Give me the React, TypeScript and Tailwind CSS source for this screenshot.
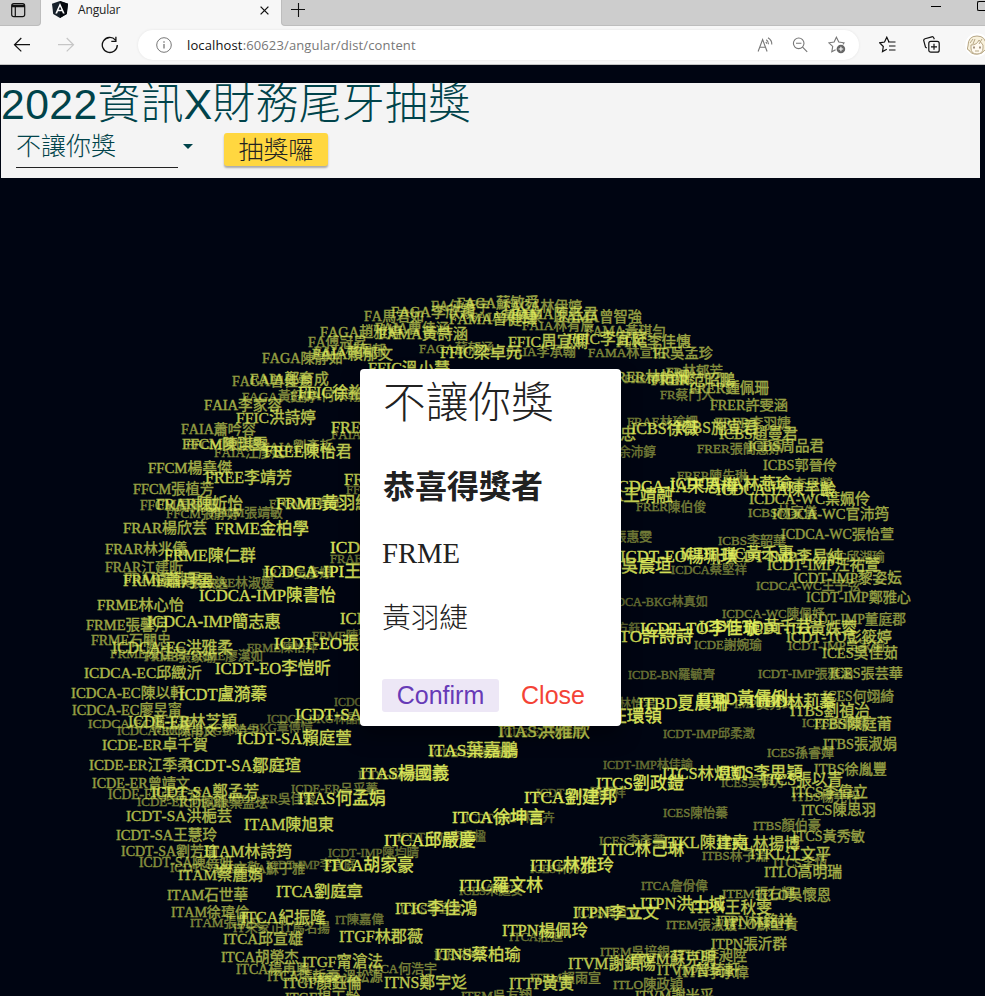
import React from "react";

type Tag = [label: string, left: number, right: number, middle: number];

const tags: Tag[] = [
  ["FA馬君如", 364, 424, 316], ["FAGA趙雅婷", 320, 402, 332], ["FA傅冠昇", 308, 367, 342],
  ["FAGA陳靜如", 262, 343, 357], ["FAIA林佩郁", 314, 386, 350], ["FAIA賴郁文", 312, 393, 353],
  ["FAGA曾佳雯", 232, 312, 381], ["FAIA鄭育成", 250, 329, 379], ["FAGA黃鈺婷", 242, 317, 396],
  ["FAIA何宗翰", 290, 361, 395], ["FFIC徐裕翔", 298, 381, 393], ["FAIA李家容", 204, 282, 405],
  ["FFIC洪詩婷", 236, 316, 417], ["FAIA蕭吟容", 181, 256, 428], ["FFCM陳佳雯", 186, 262, 444],
  ["FFCM陳琪雯", 182, 268, 443], ["FAIA江彥廷", 214, 285, 452], ["FAIA劉彥哲", 262, 333, 446],
  ["FREE陳怡君", 264, 352, 451], ["FREE林怡芳", 331, 420, 428], ["FAIA王志明", 331, 401, 434],
  ["FAGA李欣穎", 391, 475, 312], ["FA任彥宇", 431, 490, 306], ["FAGA蘇敏舜", 457, 539, 303],
  ["FAGA林伊婷", 503, 582, 306], ["FAMA陳老君", 511, 598, 314], ["FAMA曾健瑋", 449, 537, 319],
  ["FAIA黃健豪", 470, 542, 316], ["FAMA曾智強", 558, 642, 317], ["FAIA林宥辰", 522, 594, 325],
  ["FAMA黃琪勻", 585, 666, 331], ["FAIA曹佳涵", 375, 450, 327], ["FAMA黃詩涵", 378, 468, 333],
  ["FFIC周宜嫻", 508, 588, 341], ["FFIC李宜庭", 567, 647, 338], ["FFIC李佳憓", 616, 691, 342],
  ["FAGA蘇郁涵", 419, 494, 348], ["FFIC梁卓元", 440, 522, 352], ["FAIA李承翰", 506, 576, 351],
  ["FAMA林宣佑", 588, 666, 352], ["FR吳孟珍", 653, 713, 353], ["FFIC溫小慧", 368, 450, 368],
  ["FR林郁芳", 666, 723, 371], ["FRER林怡姍", 608, 690, 377], ["FRER范昭鵬", 651, 735, 379],
  ["FRER陳怡娟", 624, 692, 379], ["FRER鍾佩珊", 689, 769, 388], ["FR蔡門人", 660, 714, 395],
  ["FRER許雯涵", 710, 788, 404], ["FRAE林瑜姍", 627, 698, 422], ["FRER李羽婕", 715, 791, 423],
  ["ICBS徐薇", 631, 699, 428], ["ICBS施宜君", 676, 758, 427], ["ICBS趙曼君", 719, 798, 434],
  ["FRER張簡惠婷", 697, 782, 448], ["ICBS周品君", 748, 824, 446], ["FREE陳孝忠", 550, 636, 434],
  ["FRAE余沛錞", 586, 656, 452], ["ICBS郭晉伶", 763, 837, 464], ["FRER陳先琳", 677, 748, 476],
  ["ICDCA-IA宋思樺", 612, 738, 487], ["ICBS李思瑩", 763, 833, 484], ["ICDCA-IA林燕瑜", 670, 792, 484],
  ["ICDCA-IA陳芊齡", 716, 836, 489], ["ICDCA-IA王靖融", 549, 673, 496], ["ICDCA-WC葉姵伶", 749, 870, 499],
  ["FRER陳伯俊", 636, 706, 507], ["ICBS林家儀", 748, 817, 512], ["ICDCA-WC官沛筠", 772, 889, 514],
  ["FRER張惠雯", 582, 652, 537], ["ICBS李韶華", 718, 786, 540], ["ICDCA-WC張怡萱", 781, 894, 534],
  ["ICDT-EO楊珮琪", 620, 737, 557], ["ICDT-EO吳晨垣", 554, 672, 567], ["ICDT-HC黃禾惠", 680, 794, 553],
  ["ICDT-IMP李易純", 728, 843, 556], ["ICDCA-WC邱湖瑜", 781, 885, 557], ["ICDT-IMP汪祐萱", 767, 880, 564],
  ["ICDCA蔡堅祥", 671, 747, 570], ["ICDT-IMP黎姿妘", 793, 902, 578], ["ICDCA-WC王子弦", 756, 861, 585],
  ["ICDT-IMP鄭雅心", 806, 911, 596], ["ICDCA-BKG林真如", 604, 708, 601], ["ICDCA-WC陳佩妤", 722, 825, 614],
  ["ICDT-IMP董庭郡", 804, 906, 619], ["ICDT-TO李佳璇", 640, 760, 628], ["ICDT-TO黃千芸", 699, 812, 626],
  ["ICDT-TO黃姝蓉", 747, 857, 628], ["ICDT-TO許詩詩", 574, 693, 636], ["ICDT-TO彭筱婷", 786, 892, 637],
  ["ICDE方鈺", 590, 640, 628], ["ICDE謝婉瑜", 694, 762, 645], ["ICDT-IMP吳家瑜", 788, 885, 645],
  ["ICES吳佳茹", 822, 898, 653], ["ICDE-BN羅毓齊", 628, 715, 675], ["ICDT-IMP張雅涵", 758, 853, 674],
  ["ICES張芸華", 830, 903, 672], ["ICES何翊綺", 823, 894, 696], ["ICDE-BN林怡君", 568, 656, 704],
  ["ITBD夏晨珊", 638, 728, 704], ["ITBD黃儒俐", 698, 788, 699], ["ICDT-IMP吳秀玲", 700, 795, 704],
  ["ITBD林莉蓁", 749, 836, 702], ["ITBS劉禎治", 790, 870, 710], ["ITAS汪環領", 570, 662, 716],
  ["ICES許雅筑", 802, 868, 723], ["ITBS陳庭莆", 814, 892, 724], ["ITBS張淑娟", 823, 897, 744],
  ["ICDT-IMP邱柔澂", 663, 755, 734], ["ICES孫睿嬋", 767, 834, 753], ["ICDT-IMP林佳諭", 603, 693, 764],
  ["ITBS徐胤豐", 814, 887, 768], ["ITCS林煜凱", 662, 747, 774], ["ITCS李思穎", 718, 803, 773],
  ["ITCS張以青", 762, 843, 779], ["ICES吳伊方", 721, 785, 783], ["ITCS劉政鎧", 596, 684, 783],
  ["ITCS李偉立", 791, 868, 792], ["ITBS楊堯梓", 792, 860, 796], ["ITCS陳思羽", 801, 876, 810],
  ["ICDT-IMP陳冠祥", 536, 626, 792], ["ITCA劉建邦", 524, 617, 797], ["ICES陳怡蓁", 663, 728, 813],
  ["ITBS顏伯豪", 753, 821, 825], ["ITCS黃秀敏", 792, 865, 835], ["ICDT-IMP林嘉卉", 465, 555, 817],
  ["ITCA徐坤言", 452, 545, 817], ["ICES李彥蓁", 599, 665, 841], ["ITKL陳建堯", 663, 748, 842],
  ["ITKL林揚博", 717, 800, 843], ["ITIC林己琳", 602, 684, 850], ["ITBS林子淵", 702, 768, 856],
  ["ITKL江文平", 750, 831, 853], ["ITCS李恆", 773, 828, 862], ["ITLO高明瑞", 764, 842, 872],
  ["ICES林秀芬", 530, 592, 868], ["ITIC林雅玲", 530, 614, 865], ["ICES朱庭安", 459, 523, 891],
  ["ITIC羅文林", 459, 543, 885], ["ITCA詹佾偉", 641, 708, 886], ["ITEM張右輝", 722, 795, 893],
  ["ITLO吳懷恩", 756, 831, 895], ["ITPN洪士城", 640, 725, 904], ["ITPN王秋雯", 690, 772, 907],
  ["ICES周宜文", 577, 641, 913], ["ITPN李立文", 573, 659, 913], ["ITEM張淑媛", 666, 737, 924],
  ["ITPN林銘祥", 716, 793, 921], ["ITLO蘇聖貴", 725, 798, 924], ["ITCA莊迪", 509, 563, 937],
  ["ITPN楊佩玲", 502, 588, 931], ["ITPN張沂群", 711, 787, 944], ["ITEM吳培銀", 600, 670, 952],
  ["ITLO李昶陞", 673, 747, 955], ["ITVM蘇克明", 630, 716, 958], ["ITVM謝鎮陽", 568, 656, 963],
  ["ITVM曾琦軒", 657, 740, 970], ["ITPN李承偉", 677, 749, 972], ["ITNS蔡柏瑜", 435, 521, 955],
  ["ITEM賴雨宣", 530, 601, 977], ["ITTP黃寅", 509, 574, 983], ["ITLO陳政穎", 613, 683, 984],
  ["ITEM吳友翔", 461, 532, 995], ["ITVM謝米采", 635, 714, 996], ["ICDE-ER林雅君", 500, 585, 732],
  ["ITAS洪雅欣", 498, 590, 731], ["ICDE-ER陳靖雯", 430, 515, 753], ["ITAS葉嘉鵬", 428, 518, 750],
  ["FFCM楊堯傑", 148, 232, 468], ["FREE李靖芳", 205, 292, 477], ["FFCM張植芳", 133, 214, 489],
  ["FFCM周佩珊", 140, 217, 505], ["FRAR陳妡怡", 156, 243, 503], ["FFCM張靜婷", 166, 240, 513],
  ["FFCM張靖敏", 210, 283, 513], ["FFCM林宥廷", 269, 342, 504], ["FRME黃羽緁", 276, 372, 504],
  ["FRAR楊欣芸", 123, 207, 528], ["FRME金柏學", 215, 309, 529], ["FRAR林兆儀", 105, 187, 549],
  ["FRME陳仁群", 164, 256, 555], ["FRAR江建昕", 105, 183, 567], ["FRAR謝佳雯", 124, 201, 578],
  ["FRME蕭月雲", 123, 213, 580], ["FRAR張啟逸", 156, 228, 583], ["FRAE林淑媛", 202, 274, 583],
  ["FRAE吳彥婷", 262, 332, 573], ["ICDCA-IPI王建文", 264, 396, 571], ["ICDCA-IMP陳書怡", 199, 336, 596],
  ["FRME林心怡", 97, 184, 604], ["ICDCA-IMP簡志惠", 147, 281, 622], ["FRME張馨月", 86, 169, 625],
  ["ICDCA-IPI陳美", 330, 446, 547], ["FRAE黃志明", 330, 400, 559], ["FREE黃雅文", 344, 434, 480],
  ["FFCM林佳文", 346, 418, 490], ["ICDT-EO林志", 340, 440, 619], ["FRME石關忠", 91, 171, 640],
  ["FRME陳佳君", 110, 186, 653], ["ICDCA-EC洪雅柔", 112, 233, 647], ["FRME張家瑜", 144, 216, 657],
  ["FRME廖漢如", 191, 263, 656], ["FRME陳怡萍", 247, 318, 648], ["FRME陳雅文", 312, 383, 636],
  ["ICDT-EO張家豪", 274, 393, 643], ["ICDCA-EC邱緻沂", 84, 202, 672], ["ICDT-EO李愷昕", 215, 331, 669],
  ["ICDCA-EC陳以軒", 71, 185, 693], ["ICDT盧漪蓁", 179, 267, 695], ["ICDCA-EC廖昱甯", 72, 182, 710],
  ["ICDCA-EC陳玉蓮", 88, 192, 723], ["ICDE-ER林芝穎", 128, 237, 721], ["ICDCA-EC陳甫文", 117, 216, 731],
  ["ICDCA-BKG鄧皓勻", 153, 259, 731], ["ICDCA-BKG章傅愷", 210, 313, 727], ["ICDCA-BKG林晶晶", 267, 370, 718],
  ["ICDCA-BKG許文", 334, 424, 702], ["ICDT-SA林家瑋", 295, 413, 714], ["ICDE-ER卓千賀", 102, 208, 744],
  ["ICDT-SA賴庭萱", 237, 352, 739], ["ICDE-ER江季柔", 89, 192, 765], ["ICDT-SA鄒庭瑄", 188, 301, 766],
  ["ICDE-ER曾靖文", 92, 190, 782], ["ICDE-ER張孟文", 108, 202, 794], ["ICDT-SA鄭孟芳", 151, 259, 791],
  ["ICDE-ER何佩珊", 137, 227, 802], ["ICDE-ER葉盂玹", 179, 268, 803], ["ICDE-ER吳佳蓉", 228, 316, 799],
  ["ICDE-ER呂采蓁", 291, 378, 789], ["ITAS何孟娟", 298, 386, 799], ["ICDE-ER吳雅文", 358, 444, 775],
  ["ITAS楊國義", 360, 449, 773], ["ICDT-SA洪梔芸", 126, 232, 815], ["ITAM陳旭東", 244, 334, 825],
  ["ICDT-SA王慧玲", 116, 217, 835], ["ICDT-SA劉芳瑜", 121, 218, 851], ["ITAM林詩筠", 204, 292, 851],
  ["ICDT-SA陳蓓妍", 139, 233, 862], ["ICDT-SA林文敬", 170, 260, 868], ["ICDT-SA蘇于雅", 215, 305, 869],
  ["ITAM蔡麗娟", 178, 263, 874], ["ICDT-IMP李宜庭", 266, 356, 864], ["ITCA胡家豪", 324, 414, 866],
  ["ICDT-IMP陳均晴", 328, 419, 853], ["ICDT-IMP李孟楹", 397, 486, 837], ["ITCA邱嚴慶", 384, 476, 840],
  ["ITAM石世華", 167, 248, 895], ["ITCA劉庭章", 276, 363, 892], ["ITAM徐瑋倫", 171, 249, 911],
  ["ITCA紀振隆", 241, 326, 917], ["ITAM張凱文", 190, 263, 922], ["IT朱家正", 233, 283, 928],
  ["IT馬名揚", 280, 330, 928], ["IT陳嘉偉", 335, 384, 920], ["ITCA邱宣雄", 223, 303, 939],
  ["ITGF林郡薇", 339, 423, 936], ["ICES李宜文", 400, 464, 909], ["ITIC李佳鴻", 395, 477, 909],
  ["ITCA胡榮杰", 221, 299, 957], ["ITGF甯滄法", 302, 383, 961], ["ITCA楊再興", 236, 310, 969],
  ["ITCA張哲豪", 267, 340, 976], ["ITCA溫松源", 312, 383, 976], ["ITCA何浩宇", 368, 437, 969],
  ["ITGF顏鈺倫", 283, 362, 983], ["ICES林宜", 434, 486, 955], ["ITNS鄭宇彣", 384, 467, 982],
  ["ITGF楊玉齡", 285, 360, 998],
];

// Advance widths of the serif capitals, in em.
const advance: Record<string, number> = {
  A: 0.722, B: 0.667, C: 0.667, D: 0.722, E: 0.611, F: 0.556, G: 0.722, H: 0.722, I: 0.333,
  J: 0.389, K: 0.722, L: 0.611, M: 0.889, N: 0.722, O: 0.722, P: 0.556, R: 0.667, S: 0.556,
  T: 0.611, V: 0.722, W: 0.944, "-": 0.333,
};

function TagSphere() {
  return (
    <div className="absolute inset-0 overflow-hidden font-['Liberation_Serif','Noto_Sans_CJK_TC',serif] text-[#e6f35f] [-webkit-text-stroke:0.35px_#e6f35f] [font-kerning:none]">
      {tags.map(([label, left, right, middle]) => {
        const ems = [...label].reduce((sum, ch) => sum + (advance[ch] ?? 1), 0);
        const size = (right - left) / ems;
        const near = Math.min(1, Math.max(0, (size - 12) / 5.2));
        return (
          <span
            key={label + left}
            className="absolute leading-none whitespace-nowrap"
            style={{ left, top: middle - 64.4 - size / 2, fontSize: size, opacity: 0.43 + near * 0.52 }}
          >
            {label}
          </span>
        );
      })}
    </div>
  );
}

function AngularLogo() {
  return (
    <svg className="h-[17px] w-4" viewBox="0 0 16 17">
      <path d="M8 0 16 2.8 14.8 13 8 17 1.2 13 0 2.8Z" fill="#17212b" />
      <path d="M8 0 16 2.8 14.8 13 8 17Z" fill="#05080d" />
      <path d="M8 1.9 3.3 12.6H5.1L6 10.3h4l.9 2.3h1.8ZM8 5.4 9.4 8.8H6.6Z" fill="#fff" fillRule="evenodd" />
    </svg>
  );
}

function TabStrip() {
  return (
    <div className="flex h-[26px] bg-[#f7f7f7]">
      <div className="w-[41px] rounded-br-[4px] border-r border-b border-[#bdbdbd] bg-[#cdcdcd] pt-[3px] pl-[11px]">
        <svg className="h-[15px] w-[15px]" viewBox="0 0 15 15" fill="none" stroke="#111" strokeWidth="1.2">
          <rect x=".7" y=".7" width="13" height="13" rx="2.2" />
          <path d="M1 2.4h13M1 3.5h13" strokeWidth="1.3" />
          <path d="M4.3 4v9.5" />
        </svg>
      </div>
      <div className="flex w-[240px] items-start pl-[11px]">
        <div className="pt-px"><AngularLogo /></div>
        <span className="ml-[10px] pt-[2px] text-[12px] leading-4 tracking-[-0.15px] text-[#222]">Angular</span>
        <svg className="mt-[6px] mr-[12px] ml-auto h-[9px] w-[9px]" viewBox="0 0 9 9" stroke="#111" strokeWidth="1.3">
          <path d="m.6.6 7.8 7.8M8.4.6.6 8.4" />
        </svg>
      </div>
      <div className="flex flex-1 rounded-bl-[4px] border-b border-l border-[#bdbdbd] bg-[#cdcdcd] pl-[9px]">
        <svg className="mt-[3px] h-[14px] w-[14px]" viewBox="0 0 14 14" stroke="#111" strokeWidth="1.1">
          <path d="M7.5 0v14M0 6.5h14" />
        </svg>
        <div className="mt-[6px] ml-auto h-px w-[10px] bg-black" />
        <div className="mt-px ml-9 h-[10px] w-2 rounded-l-[2px] border border-r-0 border-black" />
      </div>
    </div>
  );
}

function Toolbar() {
  return (
    <div className="flex h-[39px] items-start overflow-hidden border-b border-[#c4c4c4] bg-[#f7f7f7] pt-1">
      <svg className="mt-[7px] ml-[13px] h-4 w-[18px] shrink-0" viewBox="0 0 18 16" fill="none" stroke="#111" strokeWidth="1.2">
        <path d="M17 7.7H1.6M8.3 1 1.5 7.7l6.8 6.7" />
      </svg>
      <svg className="mt-[7px] ml-[26px] h-4 w-[18px] shrink-0" viewBox="0 0 18 16" fill="none" stroke="#c6c6c6" strokeWidth="1.2">
        <path d="M1 7.7h15.4M9.7 1l6.8 6.7-6.8 6.7" />
      </svg>
      <svg className="mt-[6px] ml-[26px] h-[18px] w-[18px] shrink-0" viewBox="0 0 18 18" fill="none" stroke="#111" strokeWidth="1.3">
        <path d="M16.3 9A7.5 7.5 0 1 1 14.5 4.1M14.9.8v4.5h-4.6" />
      </svg>
      <div className="ml-[19px] flex h-[30px] w-[721px] shrink-0 items-center rounded-full bg-white pr-[13px] pl-[18px] shadow-[0_0_3px_rgba(0,0,0,0.08)]">
        <svg className="h-4 w-4" viewBox="0 0 16 16" fill="none" stroke="#777" strokeWidth="1">
          <circle cx="8" cy="8" r="7.3" />
          <path d="M8 7v4.6M8 4.2v1.5" strokeWidth="1.3" />
        </svg>
        <span className="ml-[15px] text-[13px] leading-[18px] tracking-[0.13px] text-[#777]">
          <span className="text-[#111]">localhost</span>:60623/angular/dist/content
        </span>
        <svg className="ml-auto h-4 w-4" viewBox="0 0 16 16" fill="none" stroke="#777" strokeWidth="1.1">
          <path d="m1.1 14.5 4.5-12 4.5 12M2.8 10.3h5.6" />
          <path d="M9.3 2.7q2.3 1.6 2.2 4.6M11 .7q4 2.3 3.8 6.8M8.7 5q1 .7 1 1.8" />
        </svg>
        <svg className="ml-[19px] h-4 w-4" viewBox="0 0 16 16" fill="none" stroke="#777" strokeWidth="1.1">
          <circle cx="6.7" cy="6.3" r="5.3" />
          <path d="M4 6.3h5.4M10.6 10.2l4.6 4.7" />
        </svg>
        <svg className="ml-[20px] h-[18px] w-[18px]" viewBox="0 0 18 18" fill="none" stroke="#777" strokeWidth="1.1">
          <path d="M14.9 8.3 16 6.8l-5.2-.8L8.4 1.2 6.1 6 .9 6.8l3.8 3.6-.9 5.4 3.8-2" />
          <circle cx="12.9" cy="13" r="4.3" fill="#666" stroke="none" />
          <path d="M12.9 10.7v4.6M10.6 13h4.6" stroke="#fff" />
        </svg>
      </div>
      <svg className="mt-[6px] ml-[20px] h-[18px] w-[17px] shrink-0" viewBox="0 0 17 18" fill="none" stroke="#111" strokeWidth="1.2">
        <path d="M10 5.9 7.8 1.2 5.5 6 .7 6.8l3.6 3.7-.8 5.1 4.3-2.3M9 6h7.5M10 10h6.5M10 14h6.5" />
      </svg>
      <svg className="mt-[6px] ml-[27px] h-[18px] w-[17px] shrink-0" viewBox="0 0 17 18" fill="none" stroke="#111" strokeWidth="1.2">
        <path d="m3.8 12-1.3-.8L.8 4.9C.5 3.8 1 3 2 2.7l6.8-1.9c1-.3 1.8.2 2 1.1l.5 1.4" />
        <rect x="5.8" y="5.4" width="10.4" height="10.8" rx="2" />
        <path d="M11 7.7v6M8 10.8h6" />
      </svg>
      <svg className="mt-[3px] ml-[25px] h-6 w-6 shrink-0" viewBox="0 0 24 24" fill="none" stroke="#b6a684" strokeWidth="1">
        <circle cx="12" cy="12" r="11.8" fill="#fff" stroke="none" />
        <path d="M4 17Q1.5 17.5 3 13 3 3 12 3t9 10q1.500 4.500-1 4-3 4.500-8 4-6 .5-8-4Z" fill="#f8f1dc" />
        <path d="M6 12v3q0 6 6 6t6-6v-3l-4-5q-2 5-8 5Z" fill="#fffaf0" />
        <path d="m5 10 3-4M8 11l2-5M17 6l-3 5M10 18h4" />
        <path d="M9 13.500v2M15 13.500v2" stroke="#765f44" strokeWidth="1.3" />
      </svg>
    </div>
  );
}

function DrawPanel() {
  return (
    <header className="relative mt-[18px] mr-[5px] ml-px h-[95px] bg-[#f4f4f4] text-[#00434a]">
      <h1 className="h-[46px] text-[42.7px] leading-[43px] font-light tracking-[0.4px] whitespace-nowrap">2022資訊X財務尾牙抽獎</h1>
      <div className="flex pl-[15px]">
        <div className="flex h-[39px] w-[162px] items-start border-b border-[#222] text-[25px] leading-[34px] font-light whitespace-nowrap">
          不讓你獎
        </div>
        <div className="mt-[15px] ml-[5px] h-0 w-0 border-x-[5px] border-t-[5px] border-x-transparent border-t-[#00434a]" />
        <button className="mt-[4px] ml-[31px] h-[33px] w-[104px] rounded-[3px] bg-[#ffd740] text-[25px] leading-[32px] font-light text-[#222] shadow-[0_2px_2px_rgba(0,0,0,0.3)]">
          抽獎囉
        </button>
      </div>
    </header>
  );
}

function WinnerDialog() {
  return (
    <section className="absolute top-[304px] left-[360px] flex h-[357px] w-[261px] flex-col rounded-[4px] bg-white px-[22px] text-[#212121] shadow-[0_10px_20px_rgba(0,0,0,0.4)]">
      <h1 className="mt-[8px] h-[52px] pl-px text-[42.7px] leading-[52px] font-light whitespace-nowrap">不讓你獎</h1>
      <h2 className="mt-[36px] h-[44px] pl-px text-[32px] leading-[44px] font-bold">恭喜得獎者</h2>
      <p className="mt-[24px] h-[40px] font-['Liberation_Serif',serif] text-[28.7px] leading-[40px]">FRME</p>
      <p className="mt-[25px] h-[40px] text-[28.7px] leading-[40px] font-light">黃羽緁</p>
      <div className="mt-[41px] flex gap-[8px] text-[25px] leading-[33px]">
        <button className="h-[33px] w-[117px] rounded-[3px] bg-[#ede7f6] text-[#673ab7]">Confirm</button>
        <button className="h-[33px] w-[92px] text-[#f44336]">Close</button>
      </div>
    </section>
  );
}

export default function App() {
  return (
    <div className="flex h-[996px] w-[985px] flex-col overflow-hidden bg-[#000512]">
      <div className="font-['Open_Sans','Noto_Sans',sans-serif]">
        <TabStrip />
        <Toolbar />
      </div>
      <main className="relative flex flex-1 flex-col overflow-hidden font-['Liberation_Sans','Noto_Sans_CJK_TC',sans-serif]">
        <TagSphere />
        <DrawPanel />
        <WinnerDialog />
      </main>
    </div>
  );
}
